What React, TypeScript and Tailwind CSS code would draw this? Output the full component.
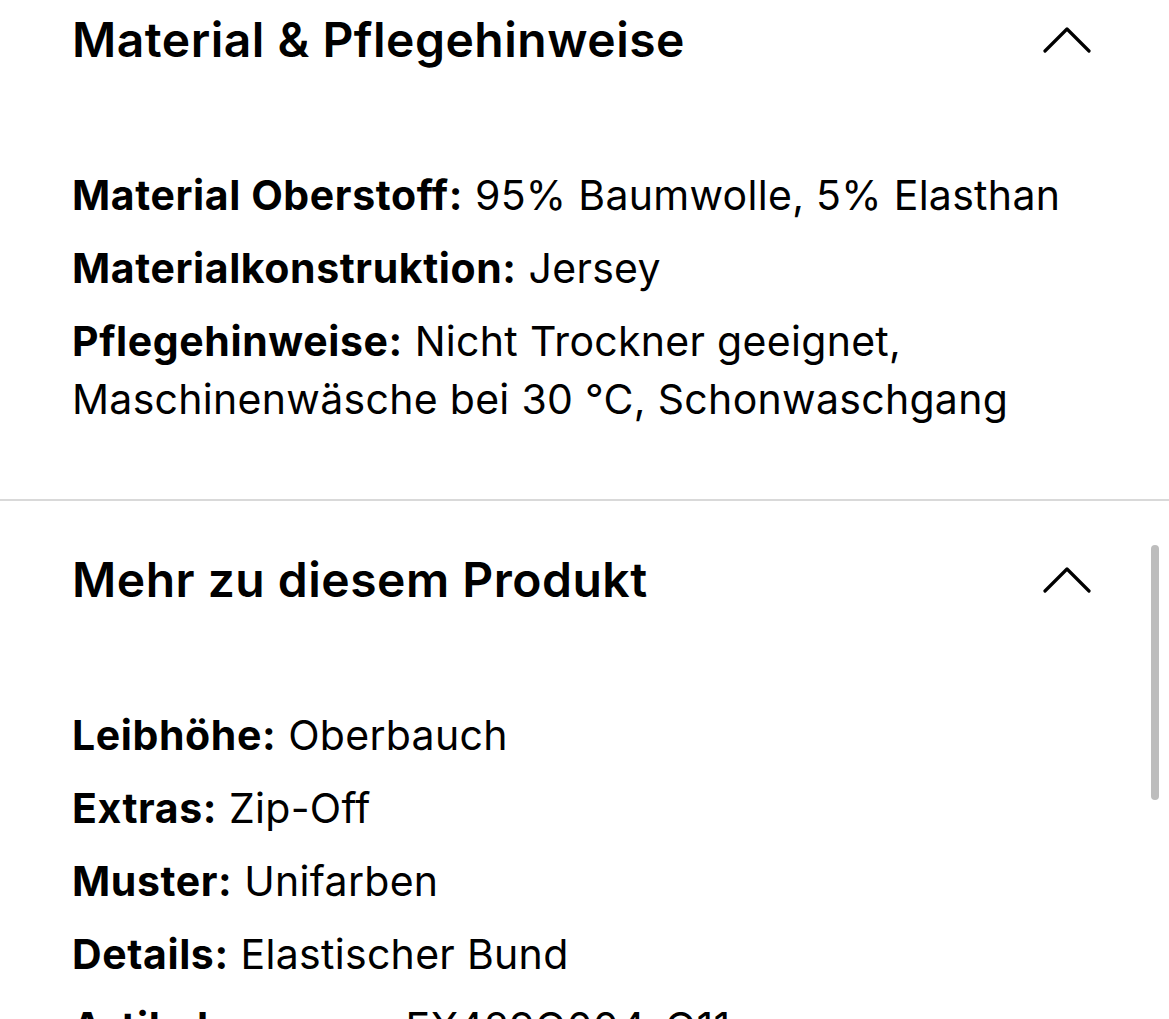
import React from "react";

interface Attribute {
  label: string;
  value: string;
}

interface Section {
  title: string;
  attributes: Attribute[];
}

const sections: Section[] = [
  {
    title: "Material & Pflegehinweise",
    attributes: [
      { label: "Material Oberstoff:", value: "95% Baumwolle, 5% Elasthan" },
      { label: "Materialkonstruktion:", value: "Jersey" },
      {
        label: "Pflegehinweise:",
        value: "Nicht Trockner geeignet, Maschinenwäsche bei 30 °C, Schonwaschgang",
      },
    ],
  },
  {
    title: "Mehr zu diesem Produkt",
    attributes: [
      { label: "Leibhöhe:", value: "Oberbauch" },
      { label: "Extras:", value: "Zip-Off" },
      { label: "Muster:", value: "Unifarben" },
      { label: "Details:", value: "Elastischer Bund" },
      { label: "Artikelnummer:", value: "EX429Q004-Q11" },
    ],
  },
];

const ChevronUp = () => (
  <svg width="48" height="26" viewBox="0 0 48 26" fill="none" className="shrink-0">
    <polyline
      points="2,24 24,2 46,24"
      stroke="#000"
      strokeWidth="3.2"
      strokeLinecap="round"
      strokeLinejoin="round"
    />
  </svg>
);

const AccordionSection: React.FC<{ section: Section; first?: boolean }> = ({ section, first }) => {
  return (
    <section className={first ? "pb-[71px]" : "pt-[39px] border-t-2 border-[#d9d9d9]"}>
      <div className="pl-[72px] pr-[60px]">
        <div className="h-[80px] flex items-center justify-between pr-[18px]">
          <h2 className="text-[48px] leading-[80px] font-semibold text-black tracking-[0.5px]">
            {section.title}
          </h2>
          <ChevronUp />
        </div>
        <div className="mt-[86px] flex flex-col gap-[15px]">
          {section.attributes.map((attr) => (
            <p key={attr.label} className="text-[41px] leading-[58px] text-black tracking-[0.3px]">
              <span className="font-bold tracking-[0.6px]">{attr.label}</span> {attr.value}
            </p>
          ))}
        </div>
      </div>
    </section>
  );
};

export default function App() {
  return (
    <div
      className="relative w-[1169px] h-[1019px] overflow-hidden bg-white"
      style={{ fontFamily: "Inter, 'Liberation Sans', sans-serif" }}
    >
      {sections.map((s, i) => (
        <AccordionSection key={s.title} section={s} first={i === 0} />
      ))}
      <div className="absolute left-[1151px] top-[545px] w-[8px] h-[255px] rounded-full bg-[#bdbdbd]" />
    </div>
  );
}
